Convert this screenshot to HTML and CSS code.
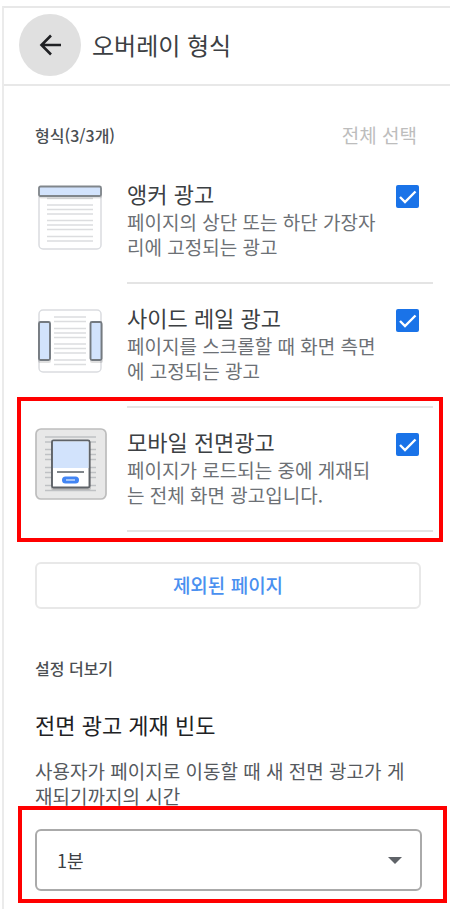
FILE: index.html
```html
<!DOCTYPE html>
<html lang="ko">
<head>
<meta charset="utf-8">
<meta name="viewport" content="width=device-width, initial-scale=1">
<title>오버레이 형식</title>
<link rel="stylesheet" href="styles.css">
</head>
<body>
<main class="panel">
  <header class="header">
    <button class="back" type="button" aria-label="뒤로">
      <svg width="24" height="24" viewBox="0 0 24 24" fill="none" stroke="#202124" stroke-width="2.6" aria-hidden="true"><path d="M23 12H4M13 2.500L3.500 12L13 21.500"/></svg>
    </button>
    <h1 class="header-title">오버레이 형식</h1>
  </header>

  <section class="formats">
    <div class="formats-head">
      <h2 class="caption">형식(3/3개)</h2>
      <button class="select-all" type="button" disabled>전체 선택</button>
    </div>
    <ul class="list">
      <li class="item">
        <svg class="thumb" viewBox="0 0 72 72" aria-hidden="true">
          <rect x="4" y="7" width="62" height="62" rx="4" fill="#fff" stroke="#dadce0" stroke-width="1.500"/>
          <path d="M12 18.500H58M12 25H58M12 29.500H58M12 34H58M12 40.500H58M12 45H58M12 49.500H58M12 56.500H58M12 61H58" stroke="#dcdddf" stroke-width="1.700"/>
          <rect x="4" y="8" width="63" height="10.500" rx="2" fill="#000" opacity=".12"/>
          <rect x="4" y="6.500" width="62" height="9.500" rx="1.500" fill="#d2e3fc" stroke="#80868b" stroke-width="1.800"/>
        </svg>
        <div class="item-body">
          <label class="item-title" for="anchor">앵커 광고</label>
          <p class="text">페이지의 상단 또는 하단 가장자리에 고정되는 광고</p>
        </div>
        <span class="check"><input id="anchor" type="checkbox" checked><svg viewBox="0 0 23 23" aria-hidden="true"><path d="M4 12L9 17L19.500 6.500"/></svg></span>
      </li>
      <li class="item">
        <svg class="thumb" viewBox="0 0 72 72" aria-hidden="true">
          <rect x="4" y="6" width="62" height="62" rx="4" fill="#fff" stroke="#dadce0" stroke-width="1.500"/>
          <path d="M19 13H51M19 17.500H51M19 24.500H51M19 29H51M19 33.500H51M19 40H51M19 44.500H51M19 49H51M19 56H51M19 60.500H51" stroke="#dcdddf" stroke-width="1.700"/>
          <rect x="3" y="19" width="13" height="40" rx="2" fill="#000" opacity=".12"/>
          <rect x="55" y="19" width="13" height="40" rx="2" fill="#000" opacity=".12"/>
          <rect x="4" y="18" width="11" height="38" rx="1.500" fill="#d2e3fc" stroke="#747a80" stroke-width="1.900"/>
          <rect x="55.500" y="18" width="11" height="38" rx="1.500" fill="#d2e3fc" stroke="#747a80" stroke-width="1.900"/>
        </svg>
        <div class="item-body">
          <label class="item-title" for="rail">사이드 레일 광고</label>
          <p class="text">페이지를 스크롤할 때 화면 측면에 고정되는 광고</p>
        </div>
        <span class="check"><input id="rail" type="checkbox" checked><svg viewBox="0 0 23 23" aria-hidden="true"><path d="M4 12L9 17L19.500 6.500"/></svg></span>
      </li>
      <li class="item item-marked">
        <svg class="thumb" viewBox="0 0 72 72" aria-hidden="true">
          <rect x="1" y="1" width="70" height="70" rx="5" fill="#e8e8e8" stroke="#bdbdbd" stroke-width="1.700"/>
          <path d="M10 9H61M10 14H61M10 21.500H61M10 26.500H61M10 31.500H61M10 39.500H61M10 44.500H61M10 49.500H61M10 57.500H61M10 62.500H61" stroke="#bfc1c4" stroke-width="1.700"/>
          <rect x="16" y="13" width="40" height="49" rx="2" fill="#000" opacity=".18"/>
          <rect x="17" y="12.500" width="37.500" height="47" rx="1.500" fill="#fff" stroke="#5f6368" stroke-width="1.900"/>
          <path d="M18 13.500H53.500V40H18Z" fill="#d2e3fc"/>
          <path d="M22 44H49" stroke="#80868b" stroke-width="2"/>
          <rect x="27" y="48.500" width="17" height="7" rx="3.500" fill="#4285f4"/>
          <path d="M31 52H40" stroke="#aecbfa" stroke-width="1.800"/>
        </svg>
        <div class="item-body">
          <label class="item-title" for="mobile">모바일 전면광고</label>
          <p class="text">페이지가 로드되는 중에 게재되는 전체 화면 광고입니다.</p>
        </div>
        <span class="check"><input id="mobile" type="checkbox" checked><svg viewBox="0 0 23 23" aria-hidden="true"><path d="M4 12L9 17L19.500 6.500"/></svg></span>
      </li>
    </ul>
    <button class="excluded" type="button">제외된 페이지</button>
  </section>

  <section class="settings">
    <h2 class="caption">설정 더보기</h2>
    <h3 class="settings-title">전면 광고 게재 빈도</h3>
    <label class="text settings-text" for="interval">사용자가 페이지로 이동할 때 새 전면 광고가 게재되기까지의 시간</label>
    <div class="dropdown">
      <select id="interval"><option>1분</option></select>
    </div>
  </section>
</main>
</body>
</html>
```
FILE: styles.css
```css
* {
  box-sizing: border-box;
}

body {
  margin: 0;
  padding-top: 6px;
  background: #fff;
  color: #3c4043;
  font-family: "Noto Sans CJK KR", "Noto Sans", sans-serif;
}

h1, h2, h3, p, ul {
  margin: 0;
  padding: 0;
}

button, select {
  font: inherit;
}

.panel {
  border-top: 2px solid #e8e8e8;
  border-left: 2px solid #ebebeb;
  margin-left: 2px;
}

.header {
  display: flex;
  align-items: center;
  gap: 11px;
  height: 78px;
  padding: 0 0 2px 15px;
  border-bottom: 2px solid #e8e8e8;
}

.back {
  display: grid;
  place-items: center;
  width: 62px;
  height: 62px;
  padding: 0;
  border: 0;
  border-radius: 50%;
  background: #e0e0e0;
}

.header-title {
  font-size: 24px;
  font-weight: 400;
  line-height: 32px;
}

.formats {
  padding: 36px 17px 0 31px;
}

.formats-head {
  display: flex;
  align-items: center;
  justify-content: space-between;
  height: 26px;
  padding-right: 16px;
}

.caption {
  color: #4a4e52;
  font-size: 16px;
  font-weight: 500;
  line-height: 24px;
}

.select-all {
  padding: 0;
  border: 0;
  background: none;
  color: #bdbdbd;
  font-size: 19px;
  line-height: 26px;
}

.list {
  padding-top: 12px;
  list-style: none;
}

.item {
  position: relative;
  display: flex;
  align-items: flex-start;
  height: 124px;
  padding: 20px 14px 0 0;
}

.item::after {
  content: "";
  position: absolute;
  right: 0;
  bottom: 0;
  left: 92px;
  height: 2px;
  background: #e4e4e4;
}

.thumb {
  flex: none;
  width: 72px;
  height: 72px;
  margin-right: 20px;
}

.item-body {
  flex: 1;
  margin-right: 14px;
}

.item-title {
  display: block;
  margin-bottom: 3px;
  font-size: 22px;
  line-height: 26px;
}

.text {
  color: #6c7075;
  font-size: 19px;
  line-height: 25px;
}

.check {
  display: grid;
  flex: none;
  width: 23px;
  height: 23px;
  margin-top: 5px;
}

.check input, .check svg {
  grid-area: 1 / 1;
  width: 100%;
  height: 100%;
  margin: 0;
}

.check input {
  appearance: none;
  border-radius: 2px;
  background: #1a73e8;
}

.check svg {
  fill: none;
  stroke: #fff;
  stroke-width: 2.4;
  pointer-events: none;
}

/* Red callout frames */
.item-marked::before, .dropdown::before {
  content: "";
  position: absolute;
  border: 4px solid #f00;
  pointer-events: none;
}

.item-marked::before {
  inset: -11px -10px -10px -18px;
}

.excluded {
  display: block;
  width: calc(100% - 12px);
  height: 47px;
  margin-top: 30px;
  padding: 0 0 2px;
  border: 2px solid #e8e8e8;
  border-radius: 6px;
  background: #fff;
  color: #4a90f0;
  font-size: 19px;
  font-weight: 500;
  line-height: 26px;
}

.settings {
  padding: 47px 28px 18px 31px;
}

.settings-title {
  margin: 28px 0 18px;
  color: #202124;
  font-size: 22px;
  font-weight: 400;
  line-height: 32px;
}

.settings-text {
  display: block;
  padding-right: 12px;
  color: #55595e;
}

.dropdown {
  position: relative;
  margin-top: 21px;
}

.dropdown::before {
  inset: -23px -25px -12px -17px;
}

.dropdown::after {
  content: "";
  position: absolute;
  top: 28px;
  right: 20px;
  border: 7px solid transparent;
  border-top-color: #5f6368;
  border-bottom: 0;
  pointer-events: none;
}

.dropdown select {
  display: block;
  appearance: none;
  width: 100%;
  height: 62px;
  padding: 0 20px;
  border: 2px solid #aaa;
  border-radius: 6px;
  background: #fff;
  color: #3c4043;
  font-size: 18px;
}
```
